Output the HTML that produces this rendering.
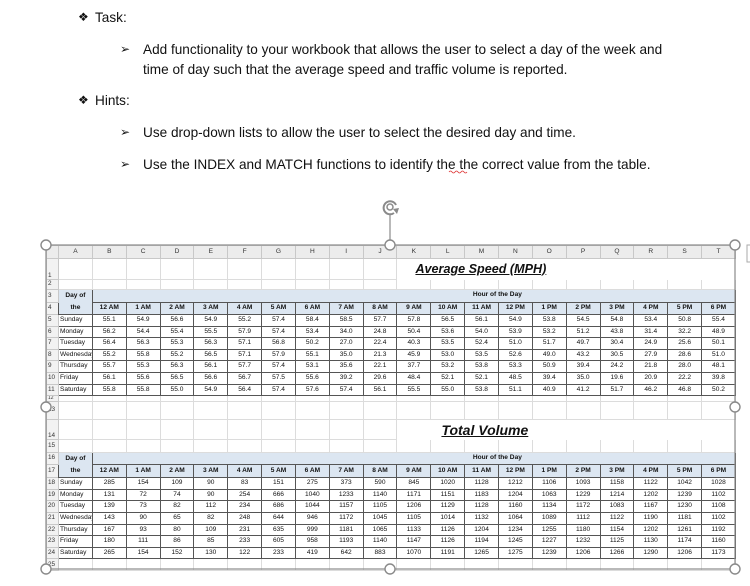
<!DOCTYPE html>
<html><head><meta charset="utf-8"><style>
*{margin:0;padding:0;box-sizing:border-box}
body{width:750px;height:586px;background:#fff;position:relative;overflow:hidden;font-family:"Liberation Sans",sans-serif;color:#111}
.t{position:absolute;font-size:13.6px;white-space:nowrap;line-height:16px}
.b{position:absolute;font-size:12px}
table{position:absolute;left:46px;top:245px;border-collapse:collapse;table-layout:fixed;width:689px;font-size:6.6px;line-height:1}
td{border:1px solid #dcdcdc;text-align:center;overflow:hidden;white-space:nowrap;padding:0}
td.rh{background:#f2f2f2;text-align:left;font-size:6.4px;color:#333;border-color:#c8c8c8;padding-left:1px}
tr.ch td{background:#ececec;color:#333;border-color:#c8c8c8}
.d td.v{border:1px solid #555}
.d td.n{text-align:left;border:1px solid #555;padding-left:1px}
.hd td.v{background:#dce6f1;font-weight:bold;border:1px solid #555}
td.hr{background:#dce6f1;font-weight:bold;border:1px solid #555;border-bottom:1px solid #555}
td.day{background:#dce6f1;font-weight:bold;border:1px solid #555}
.ttl{font-weight:bold;font-style:italic;text-decoration:underline;font-size:14px;text-align:left}
</style></head><body>
<div class="b" style="left:78px;top:10px">❖</div><div class="t" style="left:95px;top:10px">Task:</div>
<div class="b" style="left:120px;top:42px">➢</div><div class="t" style="left:143px;top:42px">Add functionality to your workbook that allows the user to select a day of the week and</div>
<div class="t" style="left:143px;top:62px">time of day such that the average speed and traffic volume is reported.</div>
<div class="b" style="left:78px;top:93px">❖</div><div class="t" style="left:95px;top:93px">Hints:</div>
<div class="b" style="left:120px;top:125px">➢</div><div class="t" style="left:143px;top:125px">Use drop-down lists to allow the user to select the desired day and time.</div>
<div class="b" style="left:120px;top:157px">➢</div><div class="t" style="left:143px;top:157px">Use the INDEX and MATCH functions to identify the the correct value from the table.</div>

<table>
<colgroup><col style="width:12px"><col span="20" style="width:33.85px"></colgroup>
<tr class="ch" style="height:13px"><td class="rh"></td><td>A</td><td>B</td><td>C</td><td>D</td><td>E</td><td>F</td><td>G</td><td>H</td><td>I</td><td>J</td><td>K</td><td>L</td><td>M</td><td>N</td><td>O</td><td>P</td><td>Q</td><td>R</td><td>S</td><td>T</td></tr>
<tr style="height:21px"><td class="rh" style="vertical-align:bottom">1</td><td></td><td></td><td></td><td></td><td></td><td></td><td></td><td></td><td></td><td></td><td colspan="10" class="ttl" style="padding-left:18px;border-color:#fff;font-size:12.6px">Average Speed (MPH)</td></tr>
<tr style="height:10px"><td class="rh">2</td><td></td><td></td><td></td><td></td><td></td><td></td><td></td><td></td><td></td><td></td><td></td><td></td><td></td><td></td><td></td><td></td><td></td><td></td><td></td><td></td></tr>
<tr style="height:12px"><td class="rh">3</td><td class="day" rowspan="2" style="line-height:12px">Day of<br>the</td><td class="hr" colspan="19" style="padding-left:167px">Hour of the Day</td></tr>
<tr class="hd" style="height:12px"><td class="rh">4</td><td class="v">12 AM</td><td class="v">1 AM</td><td class="v">2 AM</td><td class="v">3 AM</td><td class="v">4 AM</td><td class="v">5 AM</td><td class="v">6 AM</td><td class="v">7 AM</td><td class="v">8 AM</td><td class="v">9 AM</td><td class="v">10 AM</td><td class="v">11 AM</td><td class="v">12 PM</td><td class="v">1 PM</td><td class="v">2 PM</td><td class="v">3 PM</td><td class="v">4 PM</td><td class="v">5 PM</td><td class="v">6 PM</td></tr>
<tr class="d" style="height:11.6px"><td class="rh">5</td><td class="n">Sunday</td><td class="v">55.1</td><td class="v">54.9</td><td class="v">56.6</td><td class="v">54.9</td><td class="v">55.2</td><td class="v">57.4</td><td class="v">58.4</td><td class="v">58.5</td><td class="v">57.7</td><td class="v">57.8</td><td class="v">56.5</td><td class="v">56.1</td><td class="v">54.9</td><td class="v">53.8</td><td class="v">54.5</td><td class="v">54.8</td><td class="v">53.4</td><td class="v">50.8</td><td class="v">55.4</td></tr>
<tr class="d" style="height:11.6px"><td class="rh">6</td><td class="n">Monday</td><td class="v">56.2</td><td class="v">54.4</td><td class="v">55.4</td><td class="v">55.5</td><td class="v">57.9</td><td class="v">57.4</td><td class="v">53.4</td><td class="v">34.0</td><td class="v">24.8</td><td class="v">50.4</td><td class="v">53.6</td><td class="v">54.0</td><td class="v">53.9</td><td class="v">53.2</td><td class="v">51.2</td><td class="v">43.8</td><td class="v">31.4</td><td class="v">32.2</td><td class="v">48.9</td></tr>
<tr class="d" style="height:11.6px"><td class="rh">7</td><td class="n">Tuesday</td><td class="v">56.4</td><td class="v">56.3</td><td class="v">55.3</td><td class="v">56.3</td><td class="v">57.1</td><td class="v">56.8</td><td class="v">50.2</td><td class="v">27.0</td><td class="v">22.4</td><td class="v">40.3</td><td class="v">53.5</td><td class="v">52.4</td><td class="v">51.0</td><td class="v">51.7</td><td class="v">49.7</td><td class="v">30.4</td><td class="v">24.9</td><td class="v">25.6</td><td class="v">50.1</td></tr>
<tr class="d" style="height:11.6px"><td class="rh">8</td><td class="n">Wednesday</td><td class="v">55.2</td><td class="v">55.8</td><td class="v">55.2</td><td class="v">56.5</td><td class="v">57.1</td><td class="v">57.9</td><td class="v">55.1</td><td class="v">35.0</td><td class="v">21.3</td><td class="v">45.9</td><td class="v">53.0</td><td class="v">53.5</td><td class="v">52.6</td><td class="v">49.0</td><td class="v">43.2</td><td class="v">30.5</td><td class="v">27.9</td><td class="v">28.6</td><td class="v">51.0</td></tr>
<tr class="d" style="height:11.6px"><td class="rh">9</td><td class="n">Thursday</td><td class="v">55.7</td><td class="v">55.3</td><td class="v">56.3</td><td class="v">56.1</td><td class="v">57.7</td><td class="v">57.4</td><td class="v">53.1</td><td class="v">35.6</td><td class="v">22.1</td><td class="v">37.7</td><td class="v">53.2</td><td class="v">53.8</td><td class="v">53.3</td><td class="v">50.9</td><td class="v">39.4</td><td class="v">24.2</td><td class="v">21.8</td><td class="v">28.0</td><td class="v">48.1</td></tr>
<tr class="d" style="height:11.6px"><td class="rh">10</td><td class="n">Friday</td><td class="v">56.1</td><td class="v">55.6</td><td class="v">56.5</td><td class="v">56.6</td><td class="v">56.7</td><td class="v">57.5</td><td class="v">55.6</td><td class="v">39.2</td><td class="v">29.6</td><td class="v">48.4</td><td class="v">52.1</td><td class="v">52.1</td><td class="v">48.5</td><td class="v">39.4</td><td class="v">35.0</td><td class="v">19.6</td><td class="v">20.9</td><td class="v">22.2</td><td class="v">39.8</td></tr>
<tr class="d" style="height:11.6px"><td class="rh">11</td><td class="n">Saturday</td><td class="v">55.8</td><td class="v">55.8</td><td class="v">55.0</td><td class="v">54.9</td><td class="v">56.4</td><td class="v">57.4</td><td class="v">57.6</td><td class="v">57.4</td><td class="v">56.1</td><td class="v">55.5</td><td class="v">55.0</td><td class="v">53.8</td><td class="v">51.1</td><td class="v">40.9</td><td class="v">41.2</td><td class="v">51.7</td><td class="v">46.2</td><td class="v">46.8</td><td class="v">50.2</td></tr>
<tr style="height:6px"><td class="rh" style="font-size:5px">12</td><td></td><td></td><td></td><td></td><td></td><td></td><td></td><td></td><td></td><td></td><td></td><td></td><td></td><td></td><td></td><td></td><td></td><td></td><td></td><td></td></tr>
<tr style="height:18px"><td class="rh">13</td><td></td><td></td><td></td><td></td><td></td><td></td><td></td><td></td><td></td><td></td><td></td><td></td><td></td><td></td><td></td><td></td><td></td><td></td><td></td><td></td></tr>
<tr style="height:20px"><td class="rh" style="vertical-align:bottom">14</td><td></td><td></td><td></td><td></td><td></td><td></td><td></td><td></td><td></td><td></td><td colspan="10" class="ttl" style="padding-left:44px;border-color:#fff">Total Volume</td></tr>
<tr style="height:13px"><td class="rh">15</td><td></td><td></td><td></td><td></td><td></td><td></td><td></td><td></td><td></td><td></td><td></td><td></td><td></td><td></td><td></td><td></td><td></td><td></td><td></td><td></td></tr>
<tr style="height:11px"><td class="rh">16</td><td class="day" rowspan="2" style="line-height:12px">Day of<br>the</td><td class="hr" colspan="19" style="padding-left:167px">Hour of the Day</td></tr>
<tr class="hd" style="height:12px"><td class="rh">17</td><td class="v">12 AM</td><td class="v">1 AM</td><td class="v">2 AM</td><td class="v">3 AM</td><td class="v">4 AM</td><td class="v">5 AM</td><td class="v">6 AM</td><td class="v">7 AM</td><td class="v">8 AM</td><td class="v">9 AM</td><td class="v">10 AM</td><td class="v">11 AM</td><td class="v">12 PM</td><td class="v">1 PM</td><td class="v">2 PM</td><td class="v">3 PM</td><td class="v">4 PM</td><td class="v">5 PM</td><td class="v">6 PM</td></tr>
<tr class="d" style="height:11.6px"><td class="rh">18</td><td class="n">Sunday</td><td class="v">285</td><td class="v">154</td><td class="v">109</td><td class="v">90</td><td class="v">83</td><td class="v">151</td><td class="v">275</td><td class="v">373</td><td class="v">590</td><td class="v">845</td><td class="v">1020</td><td class="v">1128</td><td class="v">1212</td><td class="v">1106</td><td class="v">1093</td><td class="v">1158</td><td class="v">1122</td><td class="v">1042</td><td class="v">1028</td></tr>
<tr class="d" style="height:11.6px"><td class="rh">19</td><td class="n">Monday</td><td class="v">131</td><td class="v">72</td><td class="v">74</td><td class="v">90</td><td class="v">254</td><td class="v">666</td><td class="v">1040</td><td class="v">1233</td><td class="v">1140</td><td class="v">1171</td><td class="v">1151</td><td class="v">1183</td><td class="v">1204</td><td class="v">1063</td><td class="v">1229</td><td class="v">1214</td><td class="v">1202</td><td class="v">1239</td><td class="v">1102</td></tr>
<tr class="d" style="height:11.6px"><td class="rh">20</td><td class="n">Tuesday</td><td class="v">139</td><td class="v">73</td><td class="v">82</td><td class="v">112</td><td class="v">234</td><td class="v">686</td><td class="v">1044</td><td class="v">1157</td><td class="v">1105</td><td class="v">1206</td><td class="v">1129</td><td class="v">1128</td><td class="v">1160</td><td class="v">1134</td><td class="v">1172</td><td class="v">1083</td><td class="v">1167</td><td class="v">1230</td><td class="v">1108</td></tr>
<tr class="d" style="height:11.6px"><td class="rh">21</td><td class="n">Wednesday</td><td class="v">143</td><td class="v">90</td><td class="v">65</td><td class="v">82</td><td class="v">248</td><td class="v">644</td><td class="v">946</td><td class="v">1172</td><td class="v">1045</td><td class="v">1105</td><td class="v">1014</td><td class="v">1132</td><td class="v">1064</td><td class="v">1089</td><td class="v">1112</td><td class="v">1122</td><td class="v">1190</td><td class="v">1181</td><td class="v">1102</td></tr>
<tr class="d" style="height:11.6px"><td class="rh">22</td><td class="n">Thursday</td><td class="v">167</td><td class="v">93</td><td class="v">80</td><td class="v">109</td><td class="v">231</td><td class="v">635</td><td class="v">999</td><td class="v">1181</td><td class="v">1065</td><td class="v">1133</td><td class="v">1126</td><td class="v">1204</td><td class="v">1234</td><td class="v">1255</td><td class="v">1180</td><td class="v">1154</td><td class="v">1202</td><td class="v">1261</td><td class="v">1192</td></tr>
<tr class="d" style="height:11.6px"><td class="rh">23</td><td class="n">Friday</td><td class="v">180</td><td class="v">111</td><td class="v">86</td><td class="v">85</td><td class="v">233</td><td class="v">605</td><td class="v">958</td><td class="v">1193</td><td class="v">1140</td><td class="v">1147</td><td class="v">1126</td><td class="v">1194</td><td class="v">1245</td><td class="v">1227</td><td class="v">1232</td><td class="v">1125</td><td class="v">1130</td><td class="v">1174</td><td class="v">1160</td></tr>
<tr class="d" style="height:11.6px"><td class="rh">24</td><td class="n">Saturday</td><td class="v">265</td><td class="v">154</td><td class="v">152</td><td class="v">130</td><td class="v">122</td><td class="v">233</td><td class="v">419</td><td class="v">642</td><td class="v">883</td><td class="v">1070</td><td class="v">1191</td><td class="v">1265</td><td class="v">1275</td><td class="v">1239</td><td class="v">1206</td><td class="v">1266</td><td class="v">1290</td><td class="v">1206</td><td class="v">1173</td></tr>
<tr style="height:12px"><td class="rh">25</td><td></td><td></td><td></td><td></td><td></td><td></td><td></td><td></td><td></td><td></td><td></td><td></td><td></td><td></td><td></td><td></td><td></td><td></td><td></td><td></td></tr>
</table>

<svg width="750" height="586" style="position:absolute;left:0;top:0" fill="none">
<rect x="46" y="245" width="689" height="324" stroke="#8a8a8a" stroke-width="1.2"/>
<line x1="390" y1="214" x2="390" y2="245" stroke="#8a8a8a" stroke-width="1.2"/>
<g fill="#fff" stroke="#8a8a8a" stroke-width="1.4">
<circle cx="46" cy="245" r="5"/><circle cx="390" cy="245" r="5"/><circle cx="735" cy="245" r="5"/>
<circle cx="46" cy="407" r="5"/><circle cx="735" cy="407" r="5"/>
<circle cx="46" cy="569" r="5"/><circle cx="390" cy="569" r="5"/><circle cx="735" cy="569" r="5"/>
</g>
<path d="M396 205 A6.5 6.5 0 1 0 394 213" stroke="#8a8a8a" stroke-width="2"/>
<path d="M393 209 L397 214 L399 208 Z" fill="#8a8a8a"/>
<circle cx="390" cy="207" r="3" stroke="#8a8a8a" stroke-width="1.5"/>
<rect x="747" y="245" width="6" height="17" stroke="#aaa"/>
<path d="M449 172 q1.5 -2 3 0 q1.5 2 3 0 q1.5 -2 3 0 q1.5 2 3 0 q1.5 -2 3 0 q1.5 2 3 0" stroke="#d33" stroke-width="0.8"/>
</svg>
</body></html>
